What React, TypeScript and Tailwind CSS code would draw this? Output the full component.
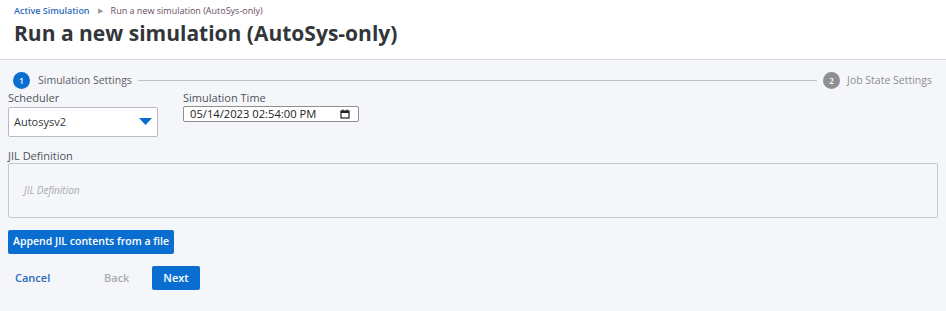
import { useState } from "react";

function StepCircle({ n, active }: { n: number; active?: boolean }) {
  return (
    <span
      className={
        "flex h-[17px] w-[17px] items-center justify-center rounded-full text-[8px] font-semibold text-white " +
        (active ? "bg-[#0a6ed1]" : "bg-[#8c8f93]")
      }
    >
      {n}
    </span>
  );
}

export default function App() {
  const [scheduler] = useState("Autosysv2");
  const [jil, setJil] = useState("");

  return (
    <div
      className="min-h-[311px] w-full bg-[#f5f6fa] text-[#32363a]"
      style={{ fontFamily: '"Open Sans", "Noto Sans", sans-serif' }}
    >
      {/* header */}
      <div className="h-[60px] border-b border-[#d6d7db] bg-white px-[14px] pt-[4px]">
        <div className="flex items-center gap-[8px] text-[9px]">
          <span className="font-semibold text-[#2b6cb8]">Active Simulation</span>
          <span className="text-[7px] text-[#9a9a9a]">▶</span>
          <span className="text-[#6a4a5e]">Run a new simulation (AutoSys-only)</span>
        </div>
        <h1 className="mt-[1px] text-[21px] font-bold leading-[28px] text-[#32363a]">
          Run a new simulation (AutoSys-only)
        </h1>
      </div>

      <div className="px-[8px]">
        {/* stepper */}
        <div className="mt-[11px] flex h-[19px] items-center pl-[5px] pr-[6px]">
          <StepCircle n={1} active />
          <span className="ml-[8px] text-[10.5px] text-[#5b6069]">Simulation Settings</span>
          <div className="mx-[6px] h-px flex-1 bg-[#b9c2cc]" />
          <StepCircle n={2} />
          <span className="ml-[7px] text-[10.5px] text-[#8c8f93]">Job State Settings</span>
        </div>

        {/* scheduler + time */}
        <div className="flex gap-[25px]">
          <div className="flex flex-col">
            <label className="text-[11px] leading-[15px] text-[#4e535b]">Scheduler</label>
            <div className="mt-[2px] flex h-[30px] w-[150px] items-center justify-between rounded-[2px] border border-[#b8bcc2] bg-white pl-[5px] pr-[5px]">
              <span className="text-[11px] text-[#32363a]">{scheduler}</span>
              <svg width="13" height="8" viewBox="0 0 13 8">
                <path d="M0 0 H13 L6.5 7 Z" fill="#0a6ed1" />
              </svg>
            </div>
          </div>
          <div className="flex flex-col">
            <label className="text-[11px] leading-[15px] text-[#4e535b]">Simulation Time</label>
            <div className="mt-[1px] flex h-[16px] w-[176px] items-center justify-between rounded-[2px] border border-[#8f8f8f] bg-white pl-[6px] pr-[8px]">
              <span className="text-[11.2px] leading-none text-[#222]">05/14/2023 02:54:00 PM</span>
              <svg width="10" height="10" viewBox="0 0 10 10">
                <rect x="1" y="2" width="8" height="7" fill="none" stroke="#222" strokeWidth="1.2" />
                <rect x="1" y="2" width="8" height="2" fill="#222" />
                <path d="M3 0.5 V2 M7 0.5 V2" stroke="#222" strokeWidth="1.2" />
              </svg>
            </div>
          </div>
        </div>

        {/* JIL */}
        <div className="mt-[12px] flex flex-col">
          <label className="text-[11px] leading-[14px] text-[#4e535b]">JIL Definition</label>
          <textarea
            value={jil}
            onChange={(e) => setJil(e.target.value)}
            placeholder="JIL Definition"
            className="h-[55px] w-full resize-none rounded-[2px] border border-[#c6c9ce] bg-[#f5f6fa] px-[15px] pt-[19px] text-[10px] italic text-[#32363a] placeholder:text-[#a6a9ad] focus:outline-none"
          />
        </div>

        <button className="mt-[12px] h-[24px] rounded-[2px] bg-[#0a6ed1] px-[5px] text-[10.5px] font-semibold text-white">
          Append JIL contents from a file
        </button>

        <div className="mt-[12px] flex items-center">
          <button className="w-[81px] pl-[7px] text-left text-[11px] font-semibold text-[#2b6cb8]">
            Cancel
          </button>
          <button className="w-[63px] pl-[15px] text-left text-[11px] font-semibold text-[#a9acb0]">
            Back
          </button>
          <button className="h-[24px] w-[48px] rounded-[2px] bg-[#0a6ed1] text-[11px] font-semibold text-white">
            Next
          </button>
        </div>
      </div>
    </div>
  );
}
